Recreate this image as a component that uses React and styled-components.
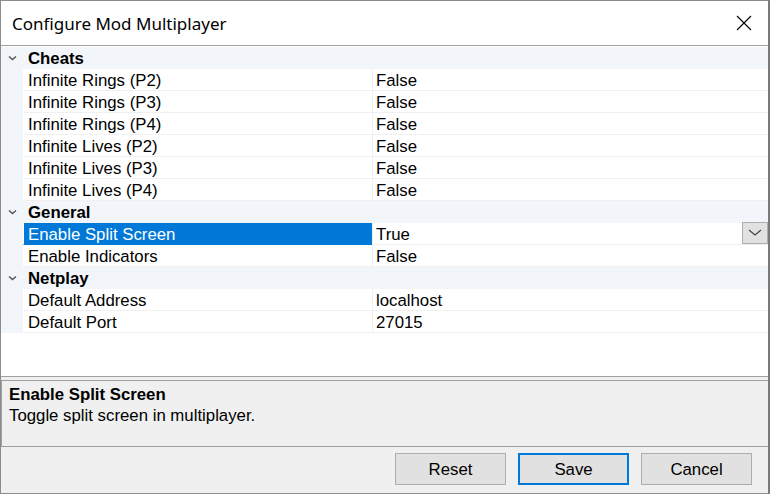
import React from 'react'
import styled, { createGlobalStyle } from 'styled-components'

const Global = createGlobalStyle`
  html, body { margin: 0; padding: 0; background: #ffffff; }
  * { box-sizing: border-box; }
`

const Window = styled.div`
  width: 770px;
  height: 494px;
  display: flex;
  flex-direction: column;
  border: 1px solid #8c8c8c;
  border-right: 2px solid #7a7a7a;
  background: #f0f0f0;
  font-family: 'Liberation Sans', Arial, sans-serif;
  color: #000;
  overflow: hidden;
`

const TitleBar = styled.div`
  height: 45px;
  flex: none;
  display: flex;
  align-items: center;
  justify-content: space-between;
  background: #ffffff;
  border-bottom: 1px solid #a0a0a0;
  padding: 0 16px 0 11px;
`

const Title = styled.span`
  font-family: 'Noto Sans', 'Open Sans', sans-serif;
  font-size: 17px;
  color: #000;
`

const CloseIcon = styled.svg`
  width: 16px;
  height: 16px;
`

const Grid = styled.div`
  flex: none;
  height: 331px;
  background: #ffffff;
  border-bottom: 1px solid #a0a0a0;
  display: flex;
  flex-direction: column;
  padding-top: 1px;
`

const CategoryRow = styled.div`
  height: 22px;
  display: flex;
  align-items: center;
  background: #f2f5fa;
  font-weight: bold;
  font-size: 16.8px;
`

const Chevron = styled.svg`
  width: 22px;
  height: 22px;
  flex: none;
`

const CategoryLabel = styled.span`
  padding: 1px 0 0 5px;
`

const PropRow = styled.div`
  height: 22px;
  display: flex;
  font-size: 16.8px;
`

const Gutter = styled.div`
  width: 22px;
  flex: none;
  background: #f2f5fa;
`

const NameCell = styled.div`
  width: 349px;
  flex: none;
  display: flex;
  align-items: center;
  padding: 2px 0 0 4px;
  background: ${p => (p.$selected ? '#0078d7' : '#ffffff')};
  color: ${p => (p.$selected ? '#ffffff' : '#000000')};
  border-bottom: 1px solid ${p => (p.$selected ? '#0078d7' : '#f0f0f0')};
  border-left: 1px solid #ffffff;
`

const ValueCell = styled.div`
  flex: 1;
  display: flex;
  align-items: center;
  justify-content: space-between;
  padding: 2px 0 0 3px;
  border-left: 1px solid #f0f0f0;
  border-bottom: 1px solid #f0f0f0;
`

const DropButton = styled.div`
  width: 26px;
  height: 22px;
  margin-top: -3px;
  background: #e1e1e1;
  border: 1px solid #adadad;
  display: flex;
  align-items: center;
  justify-content: center;
`

const Spacer = styled.div`
  height: 3px;
  flex: none;
`

const Description = styled.div`
  flex: none;
  height: 67px;
  border: 1px solid #a0a0a0;
  border-right: none;
  background: #f0f0f0;
  padding: 3px 7px;
  font-size: 16.8px;
  line-height: 21px;
`

const DescTitle = styled.div`
  font-weight: bold;
`

const ButtonBar = styled.div`
  flex: 1;
  display: flex;
  justify-content: flex-end;
  align-items: flex-start;
  gap: 12px;
  padding: 6px 16px 0 0;
`

const Button = styled.div`
  width: 111px;
  height: 32px;
  display: flex;
  align-items: center;
  justify-content: center;
  padding-top: 2px;
  background: #e1e1e1;
  border: ${p => (p.$default ? '2px solid #0078d7' : '1px solid #adadad')};
  font-size: 16.8px;
`

const categories = [
  {
    name: 'Cheats',
    props: [
      ['Infinite Rings (P2)', 'False'],
      ['Infinite Rings (P3)', 'False'],
      ['Infinite Rings (P4)', 'False'],
      ['Infinite Lives (P2)', 'False'],
      ['Infinite Lives (P3)', 'False'],
      ['Infinite Lives (P4)', 'False'],
    ],
  },
  {
    name: 'General',
    props: [
      ['Enable Split Screen', 'True', true],
      ['Enable Indicators', 'False'],
    ],
  },
  {
    name: 'Netplay',
    props: [
      ['Default Address', 'localhost'],
      ['Default Port', '27015'],
    ],
  },
]

function ChevronDown() {
  return (
    <Chevron viewBox="0 0 22 22">
      <path d="M8 9.5 L11.5 12.5 L15 9.5" fill="none" stroke="#555" strokeWidth="1.5" />
    </Chevron>
  )
}

export default function App() {
  return (
    <>
      <Global />
      <Window>
        <TitleBar>
          <Title>Configure Mod Multiplayer</Title>
          <CloseIcon viewBox="0 0 16 16">
            <path d="M1 1 L15 15 M15 1 L1 15" stroke="#000" strokeWidth="1.1" />
          </CloseIcon>
        </TitleBar>
        <Grid>
          {categories.map(cat => (
            <React.Fragment key={cat.name}>
              <CategoryRow>
                <ChevronDown />
                <CategoryLabel>{cat.name}</CategoryLabel>
              </CategoryRow>
              {cat.props.map(([name, value, selected]) => (
                <PropRow key={name}>
                  <Gutter />
                  <NameCell $selected={selected}>{name}</NameCell>
                  <ValueCell>
                    {value}
                    {selected && (
                      <DropButton>
                        <svg width="16" height="10" viewBox="0 0 16 10">
                          <path d="M2 2 L8 7 L14 2" fill="none" stroke="#444" strokeWidth="1.2" />
                        </svg>
                      </DropButton>
                    )}
                  </ValueCell>
                </PropRow>
              ))}
            </React.Fragment>
          ))}
        </Grid>
        <Spacer />
        <Description>
          <DescTitle>Enable Split Screen</DescTitle>
          <div>Toggle split screen in multiplayer.</div>
        </Description>
        <ButtonBar>
          <Button>Reset</Button>
          <Button $default>Save</Button>
          <Button>Cancel</Button>
        </ButtonBar>
      </Window>
    </>
  )
}
